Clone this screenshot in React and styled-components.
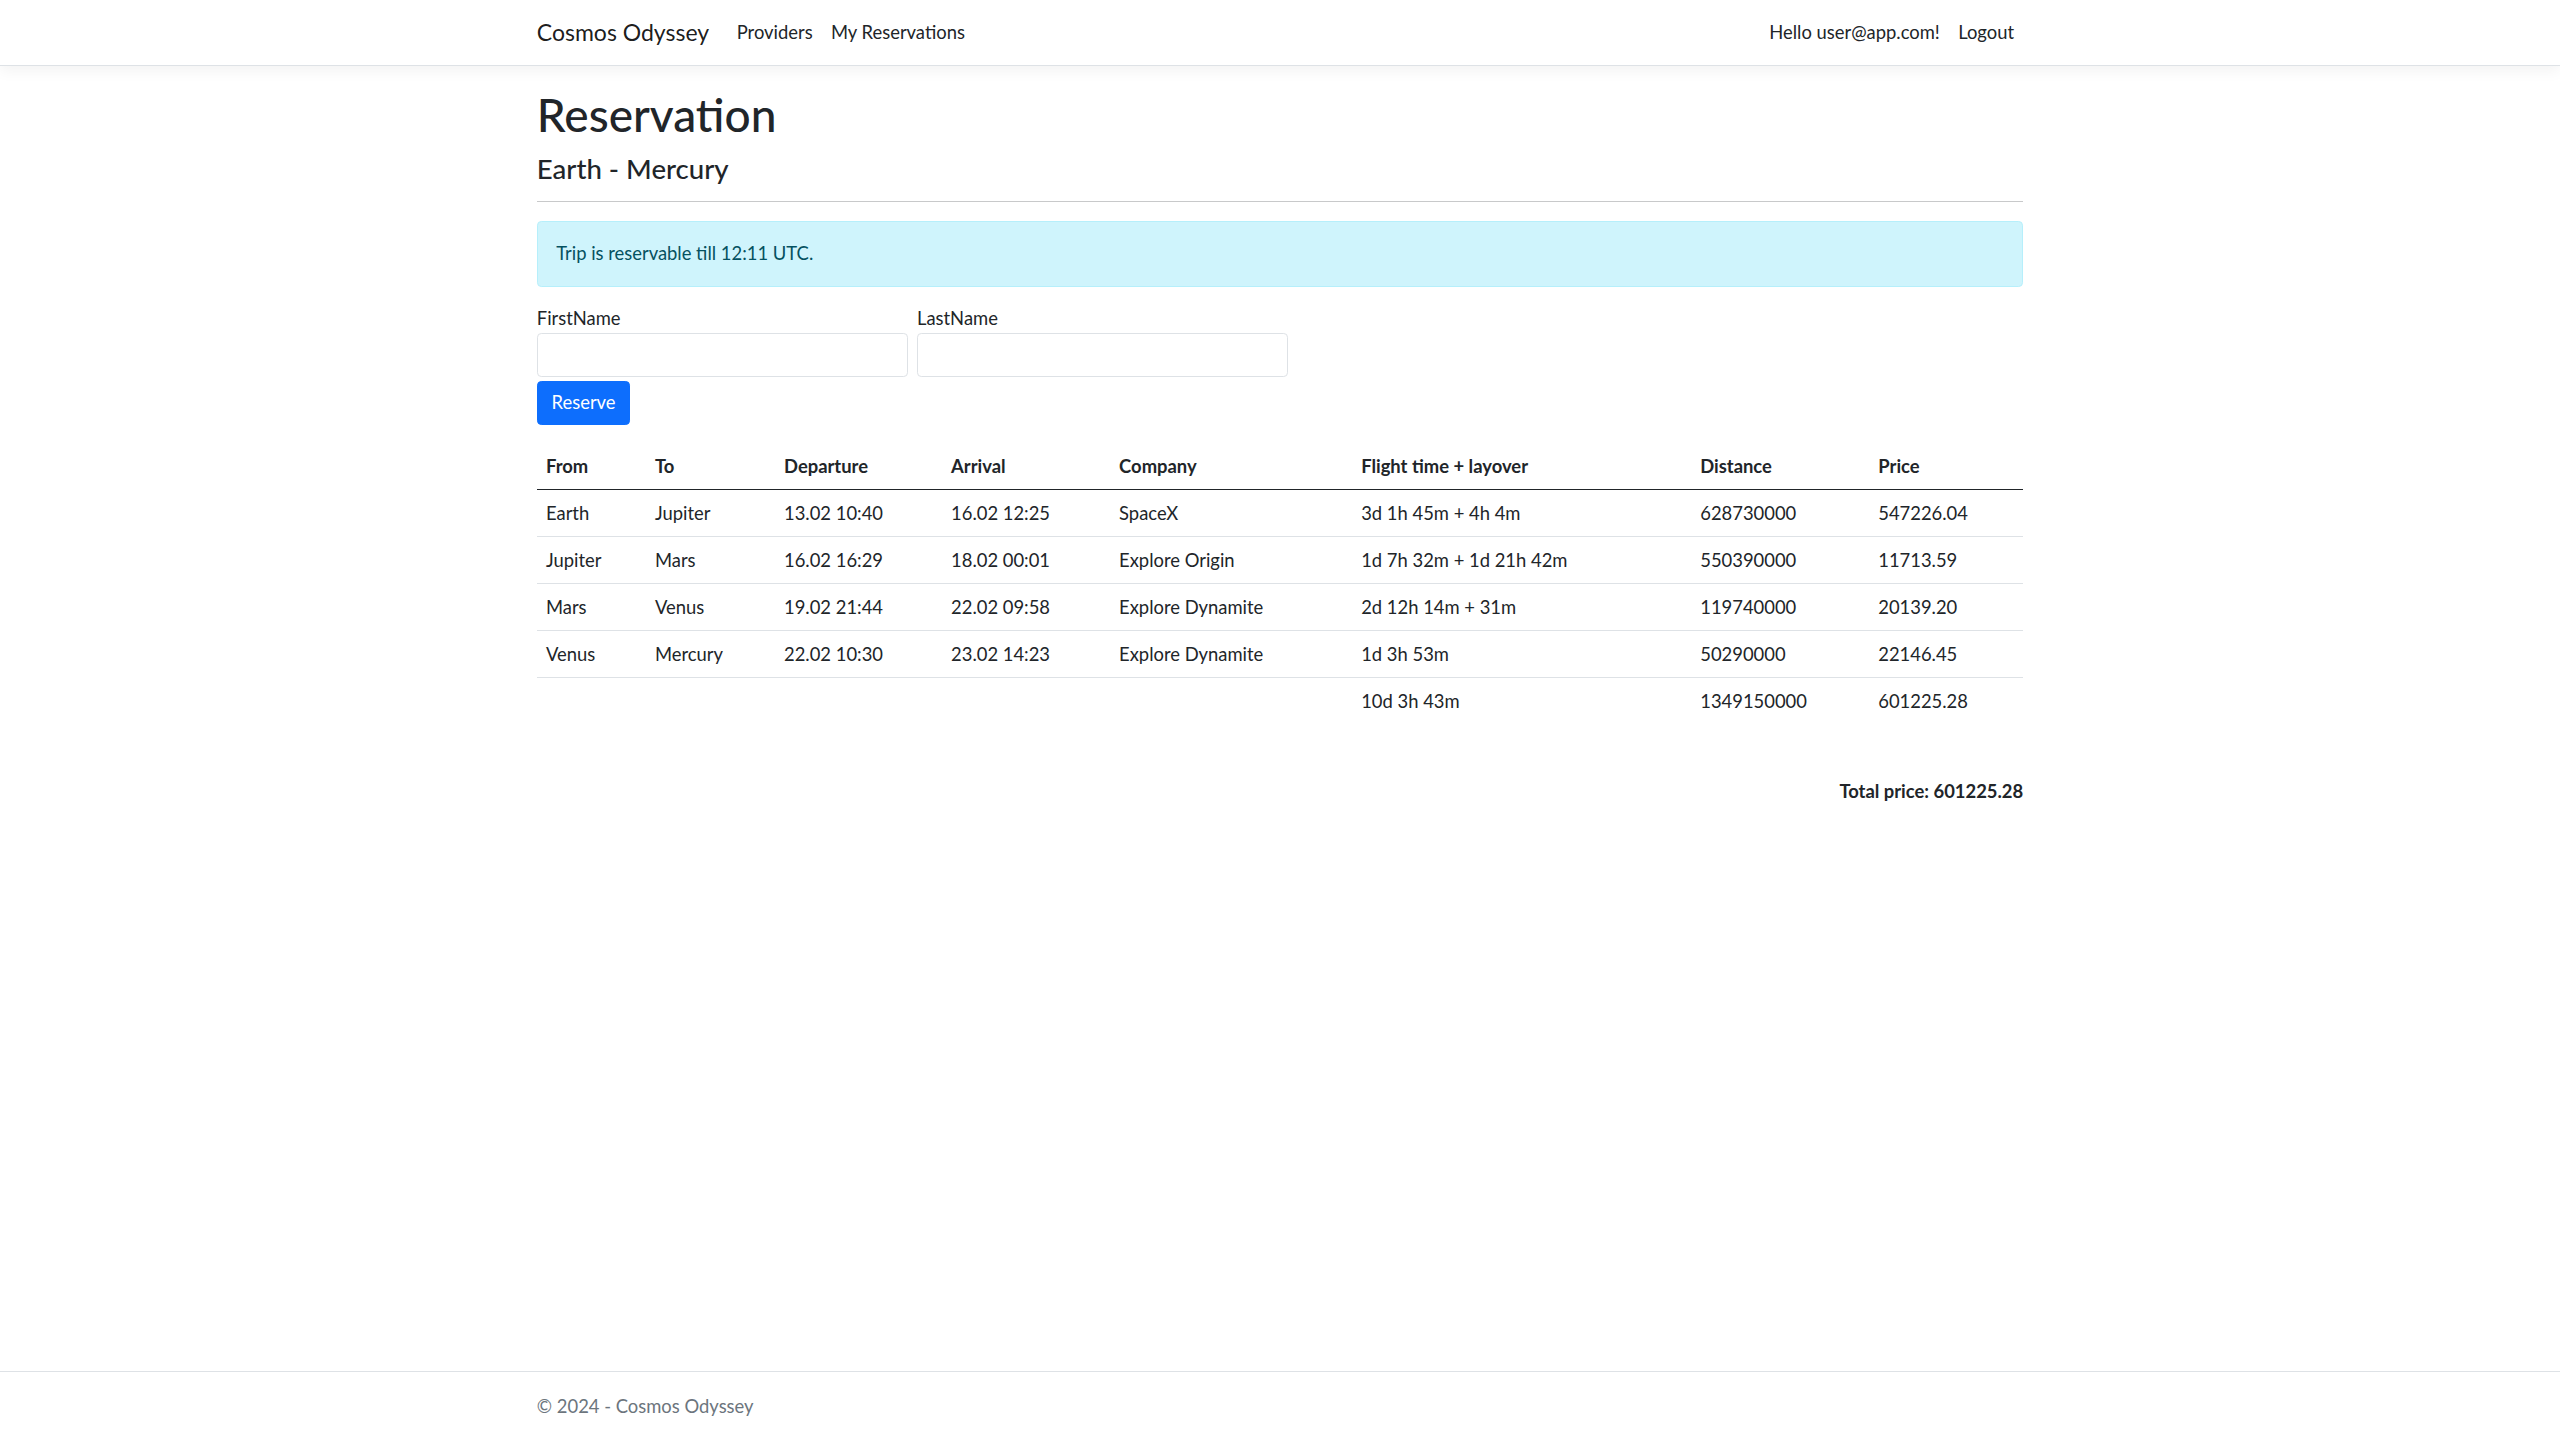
import React from "react";
import styled, { createGlobalStyle } from "styled-components";

const GlobalStyle = createGlobalStyle`
  html, body {
    margin: 0;
    padding: 0;
    background: #fff;
  }
  body {
    font-family: Lato, "Noto Sans", "Liberation Sans", sans-serif;
    font-size: 18.4px;
    line-height: 1.5;
    color: #212529;
  }
  * {
    box-sizing: border-box;
  }
`;

const Page = styled.div`
  min-height: 100vh;
  display: flex;
  flex-direction: column;
`;

const Container = styled.div`
  width: 1514px;
  margin: 0 auto;
  padding: 0 13.8px;
`;

const Navbar = styled.header`
  background: #fff;
  border-bottom: 1px solid #dee2e6;
  box-shadow: 0 4.6px 13.8px rgba(0, 0, 0, 0.05);
  margin-bottom: 18.4px;

  ${Container} {
    height: 65px;
    display: flex;
    align-items: center;
  }
`;

const Brand = styled.a`
  font-size: 23px;
  line-height: 1.5;
  color: rgba(0, 0, 0, 0.9);
  text-decoration: none;
  margin-right: 18.4px;
`;

const NavList = styled.nav`
  display: flex;
  flex: ${(p) => (p.$grow ? 1 : "none")};
  justify-content: ${(p) => (p.$end ? "flex-end" : "flex-start")};
`;

const NavLink = styled.a`
  padding: 9.2px;
  color: #212529;
  text-decoration: none;
  line-height: 1.5;
`;

const Main = styled.main`
  padding-top: 3px;
  padding-bottom: 18.4px;
`;

const Title = styled.h1`
  font-size: 46px;
  font-weight: 500;
  line-height: 1.2;
  margin: 0 0 9.2px;
`;

const Subtitle = styled.h4`
  font-size: 27.6px;
  font-weight: 500;
  line-height: 1.2;
  margin: 0;
`;

const Rule = styled.hr`
  margin: 16.4px 0 18.4px;
  border: 0;
  border-top: 1px solid #c8c9ca;
`;

const Alert = styled.div`
  padding: 18.4px;
  margin-bottom: 18.4px;
  border: 1px solid #b6effb;
  border-radius: 4.3px;
  background: #cff4fc;
  color: #055160;
`;

const Form = styled.form`
  margin-bottom: 18.4px;
`;

const Fields = styled.div`
  display: flex;
  gap: 9.2px;
`;

const Field = styled.div`
  display: flex;
  flex-direction: column;
  width: 371px;
`;

const Label = styled.label`
  line-height: 1.5;
`;

const Input = styled.input`
  height: 43.7px;
  padding: 6.9px 13.8px;
  font: inherit;
  border: 1px solid #dee2e6;
  border-radius: 4.3px;
  background: #fff;
`;

const Button = styled.button`
  margin-top: 4.6px;
  height: 43.7px;
  padding: 6.9px 13.8px;
  font: inherit;
  color: #fff;
  background: #0d6efd;
  border: 1px solid #0d6efd;
  border-radius: 4.3px;
`;

const Table = styled.table`
  width: 100%;
  border-collapse: collapse;
  table-layout: fixed;
  margin-bottom: 18.4px;

  th,
  td {
    text-align: left;
    padding: 9.2px;
    line-height: 1.5;
  }
  th {
    font-weight: 700;
    border-bottom: 1px solid #212529;
  }
  tbody td {
    border-bottom: 1px solid #dee2e6;
  }
  tfoot td {
    border-bottom: 0;
  }
`;

const Total = styled.div`
  text-align: right;
  font-weight: 700;
  margin-top: 54px;
`;

const Footer = styled.footer`
  margin-top: auto;
  border-top: 1px solid #dee2e6;
  line-height: 68px;
  color: #6c757d;
  white-space: nowrap;
`;

const columns = [109, 129, 167, 168, 242, 339, 178, 154];
const headers = ["From", "To", "Departure", "Arrival", "Company", "Flight time + layover", "Distance", "Price"];

const legs = [
  ["Earth", "Jupiter", "13.02 10:40", "16.02 12:25", "SpaceX", "3d 1h 45m + 4h 4m", "628730000", "547226.04"],
  ["Jupiter", "Mars", "16.02 16:29", "18.02 00:01", "Explore Origin", "1d 7h 32m + 1d 21h 42m", "550390000", "11713.59"],
  ["Mars", "Venus", "19.02 21:44", "22.02 09:58", "Explore Dynamite", "2d 12h 14m + 31m", "119740000", "20139.20"],
  ["Venus", "Mercury", "22.02 10:30", "23.02 14:23", "Explore Dynamite", "1d 3h 53m", "50290000", "22146.45"],
];

export default function App() {
  return (
    <Page>
      <GlobalStyle />
      <Navbar>
        <Container>
          <Brand href="#">Cosmos Odyssey</Brand>
          <NavList $grow>
            <NavLink href="#">Providers</NavLink>
            <NavLink href="#">My Reservations</NavLink>
          </NavList>
          <NavList $end>
            <NavLink href="#">Hello user@app.com!</NavLink>
            <NavLink href="#">Logout</NavLink>
          </NavList>
        </Container>
      </Navbar>

      <Container>
        <Main>
          <Title>Reservation</Title>
          <Subtitle>Earth - Mercury</Subtitle>
          <Rule />
          <Alert>Trip is reservable till 12:11 UTC.</Alert>

          <Form onSubmit={(e) => e.preventDefault()}>
            <Fields>
              <Field>
                <Label>FirstName</Label>
                <Input />
              </Field>
              <Field>
                <Label>LastName</Label>
                <Input />
              </Field>
            </Fields>
            <Button type="submit">Reserve</Button>
          </Form>

          <Table>
            <colgroup>
              {columns.map((w, i) => (
                <col key={i} style={{ width: w }} />
              ))}
            </colgroup>
            <thead>
              <tr>
                {headers.map((h) => (
                  <th key={h}>{h}</th>
                ))}
              </tr>
            </thead>
            <tbody>
              {legs.map((row, i) => (
                <tr key={i}>
                  {row.map((cell, j) => (
                    <td key={j}>{cell}</td>
                  ))}
                </tr>
              ))}
            </tbody>
            <tfoot>
              <tr>
                <td colSpan={5} />
                <td>10d 3h 43m</td>
                <td>1349150000</td>
                <td>601225.28</td>
              </tr>
            </tfoot>
          </Table>

          <Total>Total price: 601225.28</Total>
        </Main>
      </Container>

      <Footer>
        <Container>© 2024 - Cosmos Odyssey</Container>
      </Footer>
    </Page>
  );
}
